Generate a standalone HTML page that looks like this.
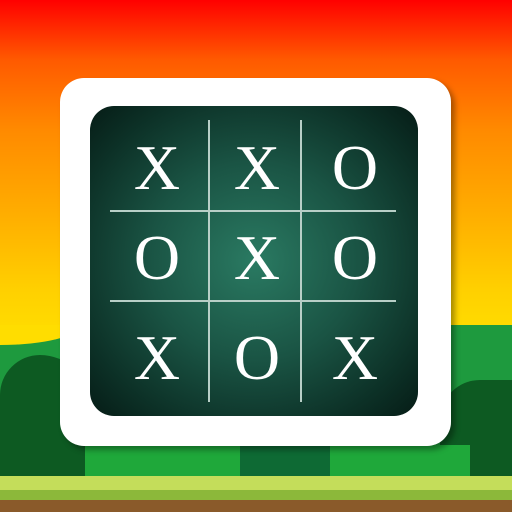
<!DOCTYPE html>
<html><head><style>
body{margin:0;width:512px;height:512px;overflow:hidden;position:relative;
background:linear-gradient(#ff0000 0px,#ff5a00 60px,#ff8a00 130px,#ffb000 220px,#ffd000 290px,#ffdd00 335px);}
.abs{position:absolute}
.card{left:60px;top:78px;width:391px;height:368px;background:#fff;border-radius:24px;box-shadow:4px 4px 6px rgba(0,0,0,.35)}
.board{left:90px;top:106px;width:328px;height:310px;border-radius:24px;
background:radial-gradient(ellipse at 50% 50%,#2a7a62 0%,#1a5444 45%,#0c3026 80%,#061c16 100%)}
.l{background:#b8cfc7}
.t{font-family:"Liberation Serif",serif;color:#fff;font-size:64px;width:80px;text-align:center;line-height:64px}
</style></head><body>
<div class="abs" style="left:0;top:325px;width:512px;height:160px;background:#1e9a3e"></div>
<div class="abs" style="left:0;top:325px;width:80px;height:20px;background:#ffdd00;border-bottom-right-radius:80px 20px"></div>
<div class="abs" style="left:0;top:355px;width:90px;height:130px;background:#0d5a22;border-radius:40px 50px 0 0"></div>
<div class="abs" style="left:440px;top:380px;width:72px;height:105px;background:#0d5a22;border-radius:40px 0 0 0"></div>
<div class="abs" style="left:85px;top:445px;width:160px;height:40px;background:#1fa83a"></div>
<div class="abs" style="left:330px;top:445px;width:140px;height:40px;background:#1fa83a"></div>
<div class="abs" style="left:240px;top:445px;width:90px;height:40px;background:#0e6a34"></div>
<div class="abs" style="left:0;top:476px;width:512px;height:14px;background:#c4dd5a"></div>
<div class="abs" style="left:0;top:490px;width:512px;height:22px;background:#8cb83a"></div>
<div class="abs" style="left:0;top:500px;width:512px;height:12px;background:#8a5a2a"></div>
<div class="abs card"></div>
<div class="abs board"></div>
<div class="abs l" style="left:208px;top:120px;width:2px;height:282px"></div>
<div class="abs l" style="left:300px;top:120px;width:2px;height:282px"></div>
<div class="abs l" style="left:110px;top:210px;width:286px;height:2px"></div>
<div class="abs l" style="left:110px;top:300px;width:286px;height:2px"></div>
<div class="abs t" style="left:117px;top:136px">X</div>
<div class="abs t" style="left:217px;top:136px">X</div>
<div class="abs t" style="left:315px;top:136px">O</div>
<div class="abs t" style="left:117px;top:226px">O</div>
<div class="abs t" style="left:217px;top:226px">X</div>
<div class="abs t" style="left:315px;top:226px">O</div>
<div class="abs t" style="left:117px;top:326px">X</div>
<div class="abs t" style="left:217px;top:326px">O</div>
<div class="abs t" style="left:315px;top:326px">X</div>
</body></html>
